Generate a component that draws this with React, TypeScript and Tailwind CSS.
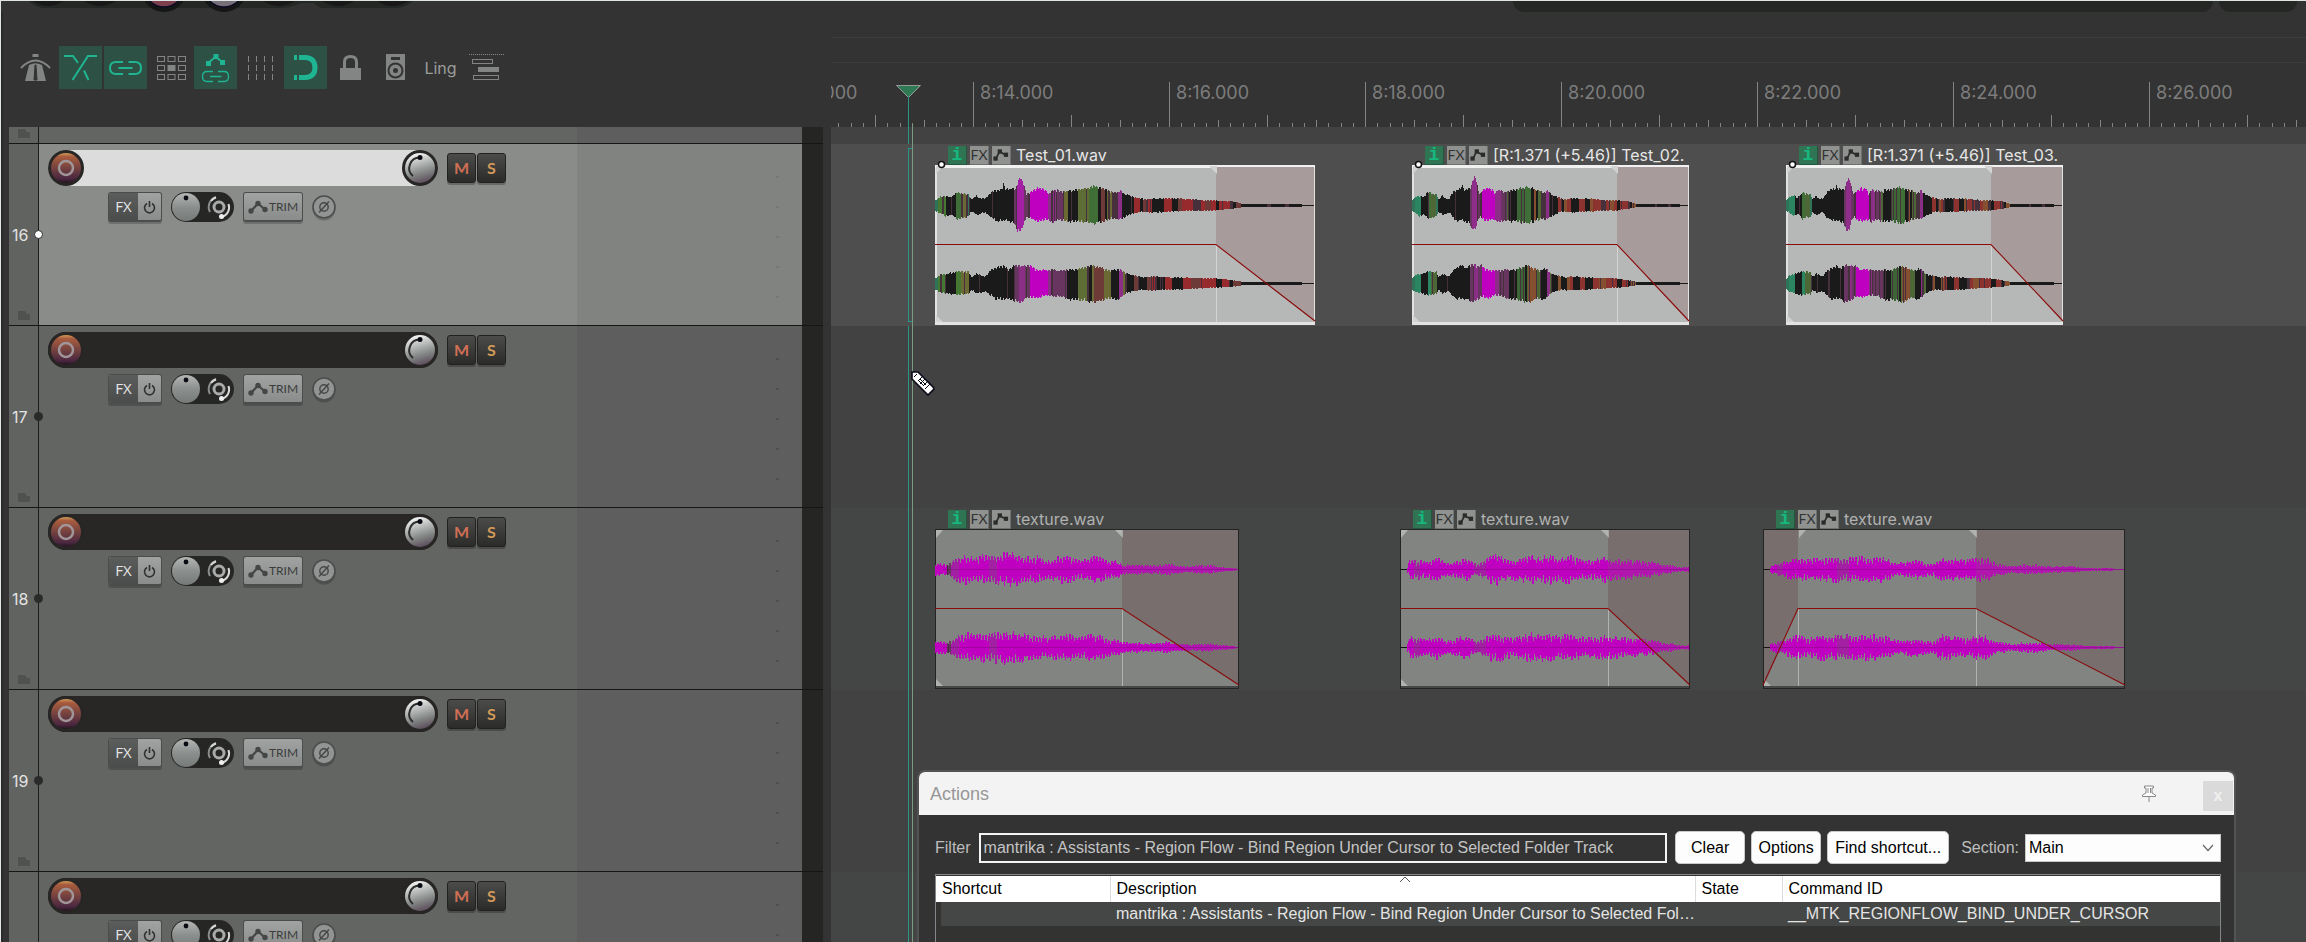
import { useState } from 'react';
import type { ReactNode } from 'react';
import clsx from 'clsx';

type Point = [number, number];
type Band = [number, string];

const RULER_LABELS = ['8:12.000', '8:14.000', '8:16.000', '8:18.000', '8:20.000', '8:22.000', '8:24.000', '8:26.000'];

/* ---------- waveform data ---------- */

const WAVE_UP: Point[] = [
  [0, 5], [5, 9], [12, 10], [15, 8], [22, 14], [28, 12], [33, 12], [36, 6], [41, 10], [45, 7], [50, 7], [56, 14], [60, 16],
  [66, 17], [68, 22], [70, 17], [74, 17], [80, 18], [83, 27], [85, 30], [88, 25], [91, 12], [93, 12], [97, 16], [103, 18], [110, 17],
  [113, 12], [117, 17], [125, 15], [131, 14], [135, 16], [145, 17], [158, 20], [164, 18], [172, 16], [180, 13], [185, 16], [190, 12],
  [200, 8], [210, 6], [217, 7], [240, 7], [258, 6], [268, 5], [280, 5], [296, 4], [305, 2], [307, 1], [365, 1], [368, 0], [380, 0],
];
const WAVE_DOWN: Point[] = [
  [0, 5], [10, 11], [16, 9], [22, 14], [32, 12], [36, 6], [42, 10], [50, 7], [56, 13], [62, 16], [72, 16], [79, 19], [82, 26],
  [86, 26], [91, 12], [97, 14], [104, 17], [110, 14], [117, 18], [125, 15], [135, 17], [145, 17], [158, 19], [166, 17], [175, 14],
  [185, 14], [195, 9], [205, 6], [215, 7], [240, 6], [258, 5], [280, 5], [296, 3], [305, 2], [307, 1], [365, 1], [368, 0], [380, 0],
];
const WAVE_UP_R: Point[] = [
  [0, 5], [5, 9], [12, 10], [22, 13], [33, 12], [36, 6], [41, 10], [50, 7], [56, 14], [68, 19], [73, 15], [81, 20], [90, 18], [95, 20],
  [100, 15], [110, 14], [117, 14], [130, 14], [145, 15], [158, 19], [166, 16], [175, 14], [185, 15], [190, 10], [200, 8], [210, 6],
  [217, 7], [240, 6], [280, 5], [296, 3], [305, 2], [307, 1], [365, 1], [368, 0], [380, 0],
];
const WAVE_DOWN_R: Point[] = [
  [0, 6], [5, 9], [12, 10], [22, 12], [33, 11], [36, 6], [41, 10], [50, 8], [60, 16], [72, 16], [84, 20], [94, 14], [104, 15],
  [112, 12], [125, 14], [135, 17], [145, 17], [160, 20], [172, 15], [182, 17], [190, 10], [205, 6], [215, 7], [240, 6], [280, 4],
  [296, 3], [305, 2], [307, 1], [365, 1], [368, 0], [380, 0],
];

const BANDS_L: Band[] = [
  [0, 't'], [3, 'g'], [11, 'k'], [21, 'n'], [26, 'o'], [32, 't'], [35, 'k'], [79, 'w'], [82, 'v'], [89, 'w'], [93, 'd'], [95, 'm'],
  [113, 'p'], [121, 'w'], [129, 'o'], [133, 'k'], [143, 'l'], [154, 'n'], [163, 'k'], [166, 'b'], [170, 'k'], [172, 'o'], [177, 'd'],
  [183, 'p'], [187, 'k'], [199, 'r'], [205, 'k'], [208, 'b'], [212, 'r'], [217, 'k'], [229, 'r'], [237, 'k'], [243, 'b'], [247, 'r'],
  [258, 'd'], [265, 'r'], [270, 'b'], [276, 'r'], [281, 'k'], [284, 'r'], [295, 'd'], [298, 'k'], [301, 'b'], [306, 'k'], [332, 'd'],
  [336, 'k'], [350, 'd'], [354, 'k'],
];
const BANDS_R: Band[] = [
  [0, 't'], [3, 'g'], [11, 'k'], [21, 'g'], [26, 'o'], [34, 'k'], [79, 'w'], [84, 'p'], [90, 'w'], [95, 'm'], [113, 'p'], [118, 'w'],
  [132, 'k'], [143, 'l'], [154, 'k'], [157, 'o'], [159, 'b'], [169, 'o'], [176, 'k'], [184, 'p'], [188, 'o'], [192, 'k'], [199, 'b'],
  [204, 'k'], [212, 'b'], [216, 'r'], [220, 'k'], [230, 'r'], [237, 'k'], [248, 'r'], [256, 'b'], [265, 'r'], [281, 'k'], [287, 'r'],
  [295, 'k'], [298, 'b'], [306, 'k'],
];
const WARM: Record<string, string> = {
  k: '#1a1a1a', t: '#2f7358', g: '#447833', n: '#3f6f37', o: '#6b6a35', l: '#5d6d35', w: '#67355f', v: '#a31fa3',
  m: '#c000c0', p: '#8a2f85', d: '#45303c', b: '#6d3a38', r: '#962a2c',
};
const COOL: Record<string, string> = { ...WARM, g: '#2b8560', l: '#3d6636', o: '#4e6736', b: '#85502f', r: '#8c332f', v: '#8f2d8b' };

const TEX_1: Point[] = [
  [0, 6], [12, 6], [16, 7], [20, 12], [25, 14], [33, 16], [38, 13], [44, 16], [52, 14], [60, 16], [66, 15], [68, 18], [82, 17], [90, 14],
  [98, 13], [102, 14], [112, 10], [120, 13], [128, 14], [137, 14], [145, 10], [156, 14], [164, 13], [170, 10], [178, 9], [184, 8],
  [187, 5], [190, 5], [222, 4], [232, 6], [240, 4], [250, 3], [268, 4], [275, 5], [281, 3], [290, 2], [299, 1], [302, 0], [304, 0],
];
const TEX_2: Point[] = [
  [7, 4], [10, 11], [18, 10], [24, 8], [37, 12], [45, 8], [52, 7], [60, 11], [68, 11], [76, 5], [82, 8], [90, 14], [97, 16], [104, 12],
  [114, 11], [120, 12], [128, 16], [136, 13], [150, 15], [158, 11], [165, 15], [175, 13], [185, 10], [195, 11], [203, 13], [215, 11],
  [230, 10], [240, 9], [252, 8], [262, 5], [270, 4], [280, 2], [290, 2],
];
const TEX_3: Point[] = [
  [7, 4], [15, 6], [25, 10], [35, 13], [45, 10], [55, 13], [75, 13], [95, 13], [108, 13], [120, 13], [128, 9], [140, 7], [152, 11],
  [162, 7], [170, 7], [178, 13], [190, 11], [202, 10], [212, 12], [221, 13], [228, 10], [234, 5], [240, 6], [248, 3], [258, 5],
  [275, 5], [285, 3], [310, 3], [325, 1], [350, 1], [352, 0], [362, 0],
];
const TEX_BANDS_1: Band[] = [[0, 'm'], [12, 'w'], [16, 'v'], [24, 'm'], [54, 'v'], [62, 'm']];
const TEX_BANDS: Band[] = [[0, 'm'], [14, 'v'], [20, 'm'], [74, 'v'], [86, 'm']];

function noise(n: number) {
  const s = Math.sin(n * 12.9898 + 4.1) * 43758.5453;
  return s - Math.floor(s);
}

function sample(points: Point[], x: number) {
  if (x < points[0][0]) return 0;
  for (let i = 1; i < points.length; i++) {
    const [x1, y1] = points[i];
    if (x <= x1) {
      const [x0, y0] = points[i - 1];
      return y0 + ((y1 - y0) * (x - x0)) / (x1 - x0);
    }
  }
  return 0;
}

function bandAt(bands: Band[], x: number) {
  let key = bands[0][1];
  for (const [start, k] of bands) if (x >= start) key = k;
  return key;
}

interface WaveProps {
  up: Point[];
  down: Point[];
  bands: Band[];
  palette: Record<string, string>;
  width: number;
  rate: number;
  center: number;
  seed: number;
  rough: number;
}

function Wave({ up, down, bands, palette, width, rate, center, seed, rough }: WaveProps) {
  const start = up[0][0];
  return (
    <g shapeRendering="crispEdges">
      {start > 0 && <rect x={0} y={center} width={start} height={1} fill="#151515" />}
      <rect x={start} y={center} width={width - 1 - start} height={1} fill={palette[bandAt(bands, 9999)]} />
      {Array.from({ length: width - start - 1 }, (_, i) => {
        const x = i + start;
        const src = x * rate;
        const wobble = 1 - rough * noise(Math.floor(x / 2) + seed) - (x % 3 === 1 ? rough * 0.7 : 0);
        const wobble2 = 1 - rough * noise(Math.floor(x / 2) + seed + 500) - (x % 3 === 2 ? rough * 0.7 : 0);
        const a = Math.round(sample(up, src) * wobble);
        const b = Math.round(sample(down, src) * wobble2);
        let key = bandAt(bands, src);
        if (key !== 'k' && key !== 'm' && key !== 'v' && noise(x + seed * 3) > 0.86) key = 'd';
        if (key === 'k' && src < 300 && noise(x + seed * 5) > 0.96) key = 'd';
        return <rect key={x} x={x} y={center - a} width={1} height={a + b + 1} fill={palette[key]} />;
      })}
    </g>
  );
}

/* ---------- media items ---------- */

interface Item {
  name: string;
  left: number;
  width: number;
  fadeIn: number;
  fadeOut: number;
  selected: boolean;
  cool?: boolean;
  tex?: Point[];
}

const TEST_ITEMS: Item[] = [
  { name: 'Test_01.wav', left: 104, width: 380, fadeIn: 0, fadeOut: 281, selected: true },
  { name: '[R:1.371 (+5.46)] Test_02.', left: 581, width: 277, fadeIn: 0, fadeOut: 205, selected: true, cool: true },
  { name: '[R:1.371 (+5.46)] Test_03.', left: 955, width: 277, fadeIn: 0, fadeOut: 205, selected: true, cool: true },
];
const TEXTURE_ITEMS: Item[] = [
  { name: 'texture.wav', left: 104, width: 304, fadeIn: 0, fadeOut: 187, selected: false, tex: TEX_1 },
  { name: 'texture.wav', left: 569, width: 290, fadeIn: 0, fadeOut: 208, selected: false, tex: TEX_2 },
  { name: 'texture.wav', left: 932, width: 362, fadeIn: 35, fadeOut: 213, selected: false, tex: TEX_3 },
];

function NodesGlyph({ className }: { className?: string }) {
  return (
    <svg viewBox="0 0 19 19" className={className}>
      <path d="M4 13.5 L8 6 L14.5 9.5" fill="none" stroke="currentColor" strokeWidth="1.8" />
      <rect x="1.5" y="11" width="4.5" height="4.5" fill="currentColor" />
      <rect x="6" y="3.5" width="4.5" height="4.5" fill="currentColor" />
      <rect x="12.5" y="7" width="4.5" height="4.5" fill="currentColor" />
    </svg>
  );
}

function MediaItem({ item }: { item: Item }) {
  const { width: w, fadeIn, fadeOut, selected, tex } = item;
  const body = selected ? '#b6b8b7' : '#828482';
  const shade = selected ? '#a89b9b' : '#786e6d';
  const mark = selected ? '#d2d3d3' : '#b1b3b1';
  const end = 156;
  const seed = item.left;
  const palette = item.cool ? COOL : WARM;
  const rate = tex ? 1 : 380 / w;
  const texBands = tex === TEX_1 ? TEX_BANDS_1 : TEX_BANDS;
  const rough = tex ? 0.4 : 0.12;
  return (
    <div className="absolute top-0.5" style={{ left: item.left, width: w }}>
      <div className="flex h-[19px] items-center gap-[3px] pl-[13px]">
        <button aria-label="Item info" className="flex size-[19px] shrink-0 items-center justify-center border-r border-b border-[#24553f] bg-[#2f7554] font-['Liberation_Mono',monospace] text-lg leading-none font-bold text-[#17b87f]">
          i
        </button>
        <button className="flex size-[19px] shrink-0 items-center justify-center border-r border-b border-[#6f716f] bg-[#909290] font-['Lato',sans-serif] text-sm leading-none text-[#333]">
          FX
        </button>
        <button aria-label="Envelopes" className="size-[19px] shrink-0 border-r border-b border-[#6f716f] bg-[#909290] text-[#2b2b2b]">
          <NodesGlyph className="size-[18px]" />
        </button>
        <span className={clsx('pl-0.5 text-base leading-[19px] whitespace-nowrap', selected ? 'text-[#e6e6e6]' : 'text-[#b0b1b0]')}>
          {item.name}
        </span>
      </div>
      <svg width={w} height="160" viewBox={`0 0 ${w} 160`} className="block overflow-visible">
        <rect width={w} height="160" fill={selected ? '#e2e2e2' : '#232423'} />
        {selected && <rect width={w} height="3" fill="#f1f1f1" />}
        <rect x={selected ? 2 : 1} y={selected ? 3 : 1} width={w - (selected ? 3 : 2)} height={selected ? 154 : 156} fill={body} />
        {!selected && <rect x="1" y="157" width={w - 2} height="2" fill="#464746" />}
        <path d={`M${fadeOut} ${selected ? 2 : 1} H${w - 1} V${end} L${fadeOut} 79 Z`} fill={shade} />
        {fadeIn > 0 && <path d={`M1 1 H${fadeIn} V79 L1 ${end} Z`} fill={shade} />}
        <path d={`M${fadeOut}.5 79 V157${fadeIn ? ` M${fadeIn}.5 79 V157` : ''}`} stroke={mark} fill="none" />
        <path d={`M${fadeIn + 1} 1 h7 l-7 8 Z M${fadeOut + 1} 1 h-8 l8 8 Z M1 157 v-7 l7 7 Z`} fill={mark} />
        <Wave
          up={tex ?? WAVE_UP} down={tex ?? WAVE_DOWN} bands={tex ? texBands : BANDS_L}
          palette={palette} width={w} rate={rate} center={40} seed={seed} rough={rough}
        />
        <Wave
          up={tex ?? WAVE_UP_R} down={tex ?? WAVE_DOWN_R} bands={tex ? texBands : BANDS_R}
          palette={palette} width={w} rate={rate} center={118} seed={seed + 7} rough={rough}
        />
        {!selected && (
          <>
            <path d={`M${fadeOut} 1 H${w - 1} V${end} L${fadeOut} 79 Z`} fill={shade} opacity="0.2" />
            <path d={`M8 40.5 H${w - 1} M8 118.5 H${w - 1}`} stroke="#5a0a5a" opacity="0.3" />
          </>
        )}
        <path
          d={`${fadeIn ? `M0 ${end} L${fadeIn} 79.5` : 'M0 79.5'} H${fadeOut} L${w} ${end}`}
          fill="none" stroke="#8a0a0a" strokeWidth="1.1"
        />
        {selected && <circle cx="6.5" cy="-0.5" r="3" fill="#fff" stroke="#111" strokeWidth="1.5" />}
      </svg>
    </div>
  );
}

/* ---------- toolbar ---------- */

function ToolButton({ label, active, children }: { label: string; active?: boolean; children: ReactNode }) {
  return (
    <button
      aria-label={label}
      aria-pressed={!!active}
      className={clsx('flex size-[43px] items-center justify-center', active ? 'bg-[#2d5145] text-[#1fb592]' : 'text-[#828583]')}
    >
      {children}
    </button>
  );
}

const svgProps = { width: 43, height: 43, viewBox: '0 0 43 43', fill: 'none' };

function Toolbar() {
  return (
    <div className="flex gap-0.5 pl-[11px]">
      <ToolButton label="Metronome">
        <svg {...svgProps}>
          <path d="M18.5 8 h6 v3 h-6 Z" fill="currentColor" />
          <path d="M7 22 Q21.5 7 36 22" stroke="currentColor" strokeWidth="2" />
          <path d="M15 19 Q21.500 15.500 28 19 L32 35 H11 Z" fill="currentColor" />
          <path d="M20 34 L21 19 H22 L23 34 Z" fill="#333" stroke="#333" />
        </svg>
      </ToolButton>
      <ToolButton label="Auto crossfade" active>
        <svg {...svgProps}>
          <path d="M5 10 H14 L19 17 M25 24.500 L29.500 34 M38 10 H29 L13.500 34" stroke="currentColor" strokeWidth="2" />
        </svg>
      </ToolButton>
      <ToolButton label="Item grouping" active>
        <svg {...svgProps}>
          <path d="M19 16 H12 Q6 16 6 22 Q6 28 12 28 H19 M24.500 16 H31 Q37 16 37 22 Q37 28 31 28 H24.500 M14.500 22 H28.500" stroke="currentColor" strokeWidth="2" />
        </svg>
      </ToolButton>
      <ToolButton label="Ripple editing">
        <svg {...svgProps}>
          {[0, 1, 2].map((r) =>
            [0, 1, 2].map((c) => (
              <rect
                key={`${r}${c}`} x={8.5 + c * 10.5} y={10.5 + r * 9} width="7" height="5" stroke="currentColor"
                fill={r === 1 && c === 1 ? 'currentColor' : 'none'}
              />
            )),
          )}
        </svg>
      </ToolButton>
      <ToolButton label="Move envelope points with items" active>
        <svg {...svgProps}>
          <path d="M14 17 L21.500 11 L28.500 16" stroke="currentColor" strokeWidth="2" />
          <rect x="12" y="15" width="5" height="5" fill="currentColor" />
          <rect x="19.500" y="8" width="5" height="5" fill="currentColor" />
          <rect x="26" y="14" width="5" height="5" fill="currentColor" />
          <path d="M19 25.500 H13 Q8.500 25.500 8.500 30.500 Q8.500 35.500 13 35.500 H19 M24 25.500 H30 Q34.500 25.500 34.500 30.500 Q34.500 35.500 30 35.500 H24 M16 30.500 H27.500" stroke="currentColor" strokeWidth="1.300" />
        </svg>
      </ToolButton>
      <ToolButton label="Grid lines">
        <svg {...svgProps}>
          <path d="M9.500 10 V35 M17.500 10 V35 M25.500 10 V35 M33.500 10 V35" stroke="currentColor" strokeDasharray="6 3" />
        </svg>
      </ToolButton>
      <ToolButton label="Snapping" active>
        <svg {...svgProps}>
          <path d="M10 9 h3 v5 h-3 Z M10 29 h3 v5 h-3 Z" fill="currentColor" />
          <path d="M15 11.500 H21 Q31 12 31 21.500 Q31 31 21 31.500 H15" stroke="currentColor" strokeWidth="5" />
        </svg>
      </ToolButton>
      <ToolButton label="Locking">
        <svg {...svgProps}>
          <rect x="11" y="22" width="21" height="12" fill="currentColor" />
          <path d="M15.500 22 V16 Q15.500 10.500 21.500 10.500 Q27.500 10.500 27.500 16 V22" stroke="currentColor" strokeWidth="3" />
        </svg>
      </ToolButton>
      <ToolButton label="Monitor">
        <svg {...svgProps}>
          <rect x="12" y="8" width="19" height="26" fill="currentColor" />
          <rect x="17" y="11" width="9" height="3" fill="#333" />
          <circle cx="21.500" cy="24.500" r="7" fill="currentColor" stroke="#333" strokeWidth="2" />
          <circle cx="21.500" cy="24.500" r="2.500" fill="#333" />
        </svg>
      </ToolButton>
      <button className="size-[43px] text-base text-[#9b9d9b]">Ling</button>
      <ToolButton label="Envelope lanes">
        <svg {...svgProps}>
          <path d="M5 8.500 H41" stroke="currentColor" strokeDasharray="1 1" />
          <rect x="8.500" y="13.500" width="20" height="4" stroke="currentColor" />
          <rect x="14" y="21" width="21" height="5" fill="currentColor" />
          <rect x="9.500" y="29.500" width="25" height="4" stroke="currentColor" />
        </svg>
      </ToolButton>
    </div>
  );
}

function Transport() {
  return (
    <div className="flex h-[11px] shrink-0 justify-between">
      <svg width="430" height="12" viewBox="0 0 430 12">
        <path d="M28 0 H412 Q404 7 396 7 H320 L312 2 H300 Q290 7 278 7 H44 Q34 7 28 0 Z" fill="#252725" />
        {[47, 99, 278, 337, 392].map((x) => (
          <path key={x} d={`M${x - 16} 0 Q${x} 10 ${x + 16} 0 Z`} fill="#171817" />
        ))}
        <circle cx="163" cy="-12" r="23" fill="#151716" />
        <ellipse cx="163" cy="-12" rx="19" ry="18" fill="#7d3f4d" stroke="#0c0b24" strokeWidth="1.500" />
        <circle cx="223" cy="-12" r="23" fill="#151716" />
        <ellipse cx="223" cy="-12" rx="19" ry="18" fill="#77707a" stroke="#0c0b24" strokeWidth="1.500" />
      </svg>
      <div className="flex gap-1.5 pr-[9px]">
        <div className="w-[700px] rounded-b-xl bg-[#252725]" />
        <div className="w-[78px] rounded-b-xl bg-[#252725]" />
      </div>
    </div>
  );
}

/* ---------- track panel ---------- */

function RecordButton() {
  return (
    <button aria-label="Record arm" className="size-9">
      <svg width="36" height="36" viewBox="0 0 36 36">
        <defs>
          <linearGradient id="rec" x1="0" y1="0" x2="0" y2="1">
            <stop offset="0" stopColor="#d09a58" />
            <stop offset="0.12" stopColor="#a85c3e" />
            <stop offset="0.5" stopColor="#74423f" />
            <stop offset="0.85" stopColor="#4b2740" />
            <stop offset="1" stopColor="#24161f" />
          </linearGradient>
        </defs>
        <circle cx="18" cy="18" r="18" fill="#272625" />
        <circle cx="18" cy="18" r="15" fill="url(#rec)" />
        <circle cx="18" cy="18" r="7" fill="none" stroke="#a09598" strokeWidth="2.500" />
      </svg>
    </button>
  );
}

function VolumeKnob() {
  return (
    <button aria-label="Volume" className="size-9">
      <svg width="36" height="36" viewBox="0 0 36 36">
        <defs>
          <linearGradient id="vol" x1="0.3" y1="0" x2="0.600" y2="1">
            <stop offset="0" stopColor="#fafafa" />
            <stop offset="0.35" stopColor="#b9bcbb" />
            <stop offset="0.65" stopColor="#868a88" />
            <stop offset="1" stopColor="#5b4c5b" />
          </linearGradient>
        </defs>
        <circle cx="18" cy="18" r="18" fill="#272625" />
        <circle cx="18" cy="18" r="15" fill="url(#vol)" />
        <path d="M18 7.500 A10.500 10.500 0 0 0 11 26" fill="none" stroke="#2d2e2d" strokeWidth="2" />
        <circle cx="18" cy="7.500" r="2.500" fill="#0b0b14" />
      </svg>
    </button>
  );
}

function FolderMark() {
  return (
    <svg width="12" height="9" viewBox="0 0 12 9" className="ml-[9px]">
      <path d="M0 0 H7 L9 3 H12 V9 H0 Z" fill="#505250" />
    </svg>
  );
}

const PANEL_BUTTON =
  'flex h-[30px] items-center overflow-hidden rounded-[3px] border border-[#4b4d4c] border-b-2 bg-linear-to-b from-[#a0a3a1] to-[#898c8a] shadow-[0_2px_0_rgba(0,0,0,0.2)]';

function TrackControls() {
  return (
    <div className="flex items-center gap-[9px] pt-1.5 pl-[69px]">
      <div className={clsx(PANEL_BUTTON, 'w-[54px]')}>
        <button className="h-full w-[29px] bg-linear-to-b from-[#5b5d5c] to-[#4b4d4c] font-['Open_Sans',sans-serif] text-[15px] leading-none text-[#e6e6e6]">FX</button>
        <button aria-label="Bypass effects" className="flex h-full flex-1 items-center justify-center">
          <svg width="13" height="14" viewBox="0 0 13 14">
            <path d="M4 3.500 A5 5 0 1 0 9 3.500 M6.500 1 V7" fill="none" stroke="#303130" strokeWidth="1.600" />
          </svg>
        </button>
      </div>
      <button aria-label="Pan and width" className="h-[30px] w-[63px]">
        <svg width="63" height="30" viewBox="0 0 63 30">
          <defs>
            <linearGradient id="pan" x1="0" y1="0" x2="0" y2="1">
              <stop offset="0" stopColor="#b3b6b4" />
              <stop offset="0.500" stopColor="#8b8f8d" />
              <stop offset="1" stopColor="#767a78" />
            </linearGradient>
          </defs>
          <rect width="63" height="30" rx="15" fill="#262625" />
          <circle cx="15" cy="15" r="14" fill="url(#pan)" />
          <circle cx="15" cy="6" r="2.400" fill="#0b0b14" />
          <path d="M39 20 A10.500 10.500 0 0 1 45 5" fill="none" stroke="#8d8f8e" strokeWidth="2" />
          <path d="M40 9 A10 10 0 0 1 45 5.500 M57.500 12 A10 10 0 0 1 51 25" fill="none" stroke="#d8dad9" strokeWidth="2" />
          <circle cx="48" cy="15" r="5" fill="none" stroke="#a9abaa" strokeWidth="3" />
          <circle cx="50.500" cy="24.500" r="2.500" fill="#efefef" />
        </svg>
      </button>
      <button className={clsx(PANEL_BUTTON, "w-[60px] gap-px pl-1 font-['Lato',sans-serif] text-xs leading-none text-[#3b3d3c]")}>
        <svg width="20" height="14" viewBox="0 0 20 14" className="shrink-0">
          <path d="M3 11 L10 3.500 L17 9.500" fill="none" stroke="#454746" strokeWidth="2.200" />
          <circle cx="3" cy="11" r="2.700" fill="#454746" />
          <circle cx="10" cy="3.500" r="2.700" fill="#454746" />
          <circle cx="17" cy="9.500" r="2.700" fill="#454746" />
        </svg>
        TRIM
      </button>
      <button aria-label="Phase" className="size-6">
        <svg width="24" height="26" viewBox="0 0 24 26" className="overflow-visible">
          <circle cx="12" cy="14" r="11.500" fill="#000" opacity="0.200" />
          <circle cx="12" cy="12" r="11" fill="#919492" stroke="#4b4d4c" strokeWidth="1.600" />
          <circle cx="12" cy="12" r="4.200" fill="none" stroke="#454746" strokeWidth="1.400" />
          <path d="M7 17.500 L17 6.500" stroke="#454746" strokeWidth="1.400" />
        </svg>
      </button>
    </div>
  );
}

const MS_BUTTON =
  "h-[30px] w-[29px] rounded-[3px] border border-[#212120] bg-linear-to-b from-[#4c4c4b] to-[#2b2b2a] font-['Lato',sans-serif] text-base leading-none font-bold shadow-[0_2px_0_rgba(0,0,0,0.25)]";

function TrackPanel({ number, selected }: { number: number; selected?: boolean }) {
  return (
    <div className="flex h-[182px] shrink-0 border-b border-[#161616]">
      <div className="relative flex w-[30px] flex-col justify-between border-r border-[#1c1c1c] bg-[#616361] pb-[5px]">
        <span />
        <span className="pt-3.5 pl-[3px] text-base leading-5 text-[#e3e4e3]">{number}</span>
        <FolderMark />
        <i className={clsx('absolute top-[86px] -right-[5px] size-[9px] rounded-full border-[#2a2a2a]', selected ? 'border bg-white' : 'bg-[#2a2a2a]')} />
      </div>
      <div className={clsx('w-[538px]', selected ? 'bg-[#8a8c8a]' : 'bg-[#636563]')}>
        <div className="flex items-center gap-[9px] pt-1.5 pl-[9px]">
          <div className={clsx('flex w-[390px] justify-between rounded-full', selected ? 'bg-[#dcdcdc]' : 'bg-[#282725]')}>
            <RecordButton />
            <input aria-label={`Track ${number} name`} className="min-w-0 flex-1 bg-transparent px-2 outline-none" />
            <VolumeKnob />
          </div>
          <div className="flex gap-px">
            <button className={clsx(MS_BUTTON, 'text-[#cf6f54]')}>M</button>
            <button className={clsx(MS_BUTTON, 'text-[#d29a58]')}>S</button>
          </div>
        </div>
        <TrackControls />
      </div>
      <div className={clsx('flex flex-1 flex-col items-end gap-[28px] pt-8 pr-[23px]', selected ? 'bg-[#818381]' : 'bg-[#5d5e5d]')}>
        {[0, 1, 2, 3, 4].map((n) => (
          <i key={n} className={clsx('h-0.5 w-[3px] shrink-0', selected ? 'bg-[#767876]' : 'bg-[#4e4f4e]')} />
        ))}
      </div>
      <div className="w-[21px] bg-[#252524]" />
    </div>
  );
}

/* ---------- arrange view ---------- */

function Ruler() {
  return (
    <div className="relative flex h-[115px] shrink-0 flex-col overflow-hidden">
      <div className="mt-[25px] h-[26px] shrink-0 border-y border-[#3d3d3d]" />
      <div className="mt-auto -ml-[54px] flex">
        {RULER_LABELS.map((label) => (
          <div key={label} className="flex h-[45px] w-[196px] shrink-0 flex-col justify-between border-l border-[#848484]">
            <span className="pl-1.5 text-lg leading-[22px] text-[#7d7d7d]">{label}</span>
            <div className="-ml-px flex items-end">
              {Array.from({ length: 16 }, (_, i) => (
                <i key={i} className={clsx('flex-1 border-l border-[#848484]', i === 8 ? 'h-3' : i % 4 === 0 ? 'h-[7px]' : 'h-1')} />
              ))}
            </div>
          </div>
        ))}
      </div>
      <svg width="25" height="30" viewBox="0 0 25 30" className="absolute bottom-3 left-[65px]">
        <path d="M0.500 0.500 H24.500 L12.500 12.500 Z" fill="#2f7a55" stroke="#979997" />
      </svg>
    </div>
  );
}

function Lane({ className, children }: { className: string; children?: ReactNode }) {
  return <div className={clsx('relative h-[182px] shrink-0', className)}>{children}</div>;
}

function Cursors() {
  return (
    <>
      <svg width="6" height="847" viewBox="0 0 6 847" className="absolute top-[96px] left-[77px]" shapeRendering="crispEdges">
        <path d="M0.500 0 V47 M0.500 229 V847 M4 51.500 H0.500 V224.500 H4" fill="none" stroke="#2a9688" />
        <path d="M4.500 27 V847" stroke="#789b82" />
      </svg>
      <svg width="26" height="26" viewBox="0 0 26 26" className="absolute top-[370px] left-[80px]">
        <path d="M1 1 H7 L22 16 L23 18 L17 24 L1 8 Z" fill="#fff" stroke="#0b0b18" strokeWidth="1.600" />
        <path d="M3 6 L6 3 M7 10 L11 6 M9 13 L14 8 M12 15 L16 11 M14 18 L19 13 M9 8 L15 14 M8 10 L13 15" stroke="#0b0b18" strokeWidth="1" />
      </svg>
    </>
  );
}

/* ---------- actions window ---------- */

const DIALOG_BUTTON = 'h-[33px] rounded-[5px] border border-[#c9c9c9] bg-[#fdfdfd] text-center text-black';

function ActionsWindow() {
  const [filter, setFilter] = useState('mantrika : Assistants - Region Flow - Bind Region Under Cursor to Selected Folder Track');
  return (
    <section
      aria-label="Actions"
      className="absolute top-[769px] right-[70px] bottom-0 left-[916px] overflow-hidden rounded-t-lg border-x-2 border-t-2 border-[#525352] bg-[#333] font-['Liberation_Sans',sans-serif] text-base text-[#bdbdbd]"
    >
      <header className="flex h-[43px] items-center bg-[#f3f3f3] pl-[11px]">
        <h1 className="flex-1 text-lg leading-5 text-[#979797]">Actions</h1>
        <button aria-label="Keep on top" className="mr-[46px]">
          <svg width="16" height="18" viewBox="0 0 16 18" fill="#fff" stroke="#888" strokeWidth="1">
            <path d="M3.500 1 H12.500 V3 H11 V8 L14.500 10 V11.500 H1.500 V10 L5 8 V3 H3.500 Z M8 12 V17 M7 3 V8 M9.500 3 V8" />
          </svg>
        </button>
        <button aria-label="Close" className="mt-[5px] mr-px h-[30px] w-[30px] bg-[#dadada] font-bold text-[#f0f0f0]">x</button>
      </header>
      <div className="flex items-center gap-2 pt-4 pr-[13px] pl-4">
        <label htmlFor="filter">Filter</label>
        <input
          id="filter"
          value={filter}
          onChange={(e) => setFilter(e.target.value)}
          className="h-[30px] min-w-0 flex-1 border-2 border-[#f4f4f4] bg-[#333] px-[3px] text-[#c4c4c4] outline-none"
        />
        <div className="flex gap-1.5">
          <button className={clsx(DIALOG_BUTTON, 'w-[70px]')}>Clear</button>
          <button className={clsx(DIALOG_BUTTON, 'w-[70px]')}>Options</button>
          <button className={clsx(DIALOG_BUTTON, 'w-[122px]')}>Find shortcut...</button>
        </div>
        <label htmlFor="section" className="ml-1">Section:</label>
        <div className="relative -ml-0.5 w-[196px]">
          <select id="section" className="h-7 w-full appearance-none border border-[#c9c9c9] bg-[#fdfdfd] px-[3px] leading-none text-black">
            <option>Main</option>
          </select>
          <svg width="12" height="8" viewBox="0 0 12 8" className="pointer-events-none absolute top-2.5 right-[7px]">
            <path d="M1 1 L6 6.500 L11 1" fill="none" stroke="#666" strokeWidth="1.200" />
          </svg>
        </div>
      </div>
      <div className="mt-2.5 mr-[13px] ml-4 h-60 border border-[#84878c] bg-[#333431] pt-px">
        <table className="w-full table-fixed border-collapse text-left">
          <colgroup>
            <col className="w-[174px]" />
            <col />
            <col className="w-[87px]" />
            <col className="w-[438px]" />
          </colgroup>
          <thead className="bg-white text-black">
            <tr className="h-[26px]">
              <th className="border-r border-[#dcdcdc] p-0 pl-1.5 font-normal">Shortcut</th>
              <th className="relative border-r border-[#dcdcdc] p-0 pl-1.5 font-normal">
                Description
                <svg width="12" height="7" viewBox="0 0 12 7" className="absolute top-0 left-1/2 -ml-1">
                  <path d="M1 6 L6 1 L11 6" fill="none" stroke="#555" />
                </svg>
              </th>
              <th className="border-r border-[#dcdcdc] p-0 pl-1.5 font-normal">State</th>
              <th className="p-0 pl-1.5 font-normal">Command ID</th>
            </tr>
          </thead>
          <tbody className="text-[#e4e4e4]">
            <tr className="h-6">
              <td className="p-0 pl-[5px]">
                <div className="h-6 bg-[#444745]" />
              </td>
              <td className="truncate bg-[#444745] p-0 pl-1.5 leading-6">{filter}</td>
              <td className="bg-[#444745]" />
              <td className="bg-[#444745] p-0 pl-1.5 leading-6">__MTK_REGIONFLOW_BIND_UNDER_CURSOR</td>
            </tr>
          </tbody>
        </table>
      </div>
    </section>
  );
}

export default function App() {
  return (
    <div className="relative flex h-screen flex-col overflow-hidden border-t border-l border-[#dfe5e3] bg-[#333] font-['Inter',sans-serif]">
      <Transport />
      <div className="flex min-h-0 flex-1 border-l-2 border-[#2a2a2a]">
        <aside className="flex w-[820px] shrink-0 flex-col overflow-hidden">
          <div className="flex h-[115px] shrink-0 items-start pt-[34px]">
            <Toolbar />
          </div>
          <div className="flex min-h-0 flex-1 flex-col overflow-hidden pl-1.5">
            <div className="flex h-[17px] shrink-0 border-b border-[#161616] bg-[#5d5e5d]">
              <div className="w-[30px] border-r border-[#1c1c1c] bg-[#616361] pt-0.5">
                <FolderMark />
              </div>
              <div className="w-[538px] bg-[#636563]" />
              <div className="flex-1" />
              <div className="w-[21px] bg-[#252524]" />
            </div>
            <TrackPanel number={16} selected />
            <TrackPanel number={17} />
            <TrackPanel number={18} />
            <TrackPanel number={19} />
            <TrackPanel number={20} />
          </div>
        </aside>
        <main className="ml-2 flex min-w-0 flex-1 flex-col overflow-hidden">
          <Ruler />
          <div className="h-[17px] shrink-0 bg-[#424242]" />
          <Lane className="bg-[#4e4e4e]">
            {TEST_ITEMS.map((item) => (
              <MediaItem key={item.left} item={item} />
            ))}
          </Lane>
          <Lane className="bg-[#424242]" />
          <Lane className="bg-[#444645]">
            {TEXTURE_ITEMS.map((item) => (
              <MediaItem key={item.left} item={item} />
            ))}
          </Lane>
          <Lane className="bg-[#424242]" />
          <Lane className="bg-[#444645]" />
        </main>
        <div className="pointer-events-none absolute top-0 left-[830px]">
          <Cursors />
        </div>
      </div>
      <ActionsWindow />
    </div>
  );
}
